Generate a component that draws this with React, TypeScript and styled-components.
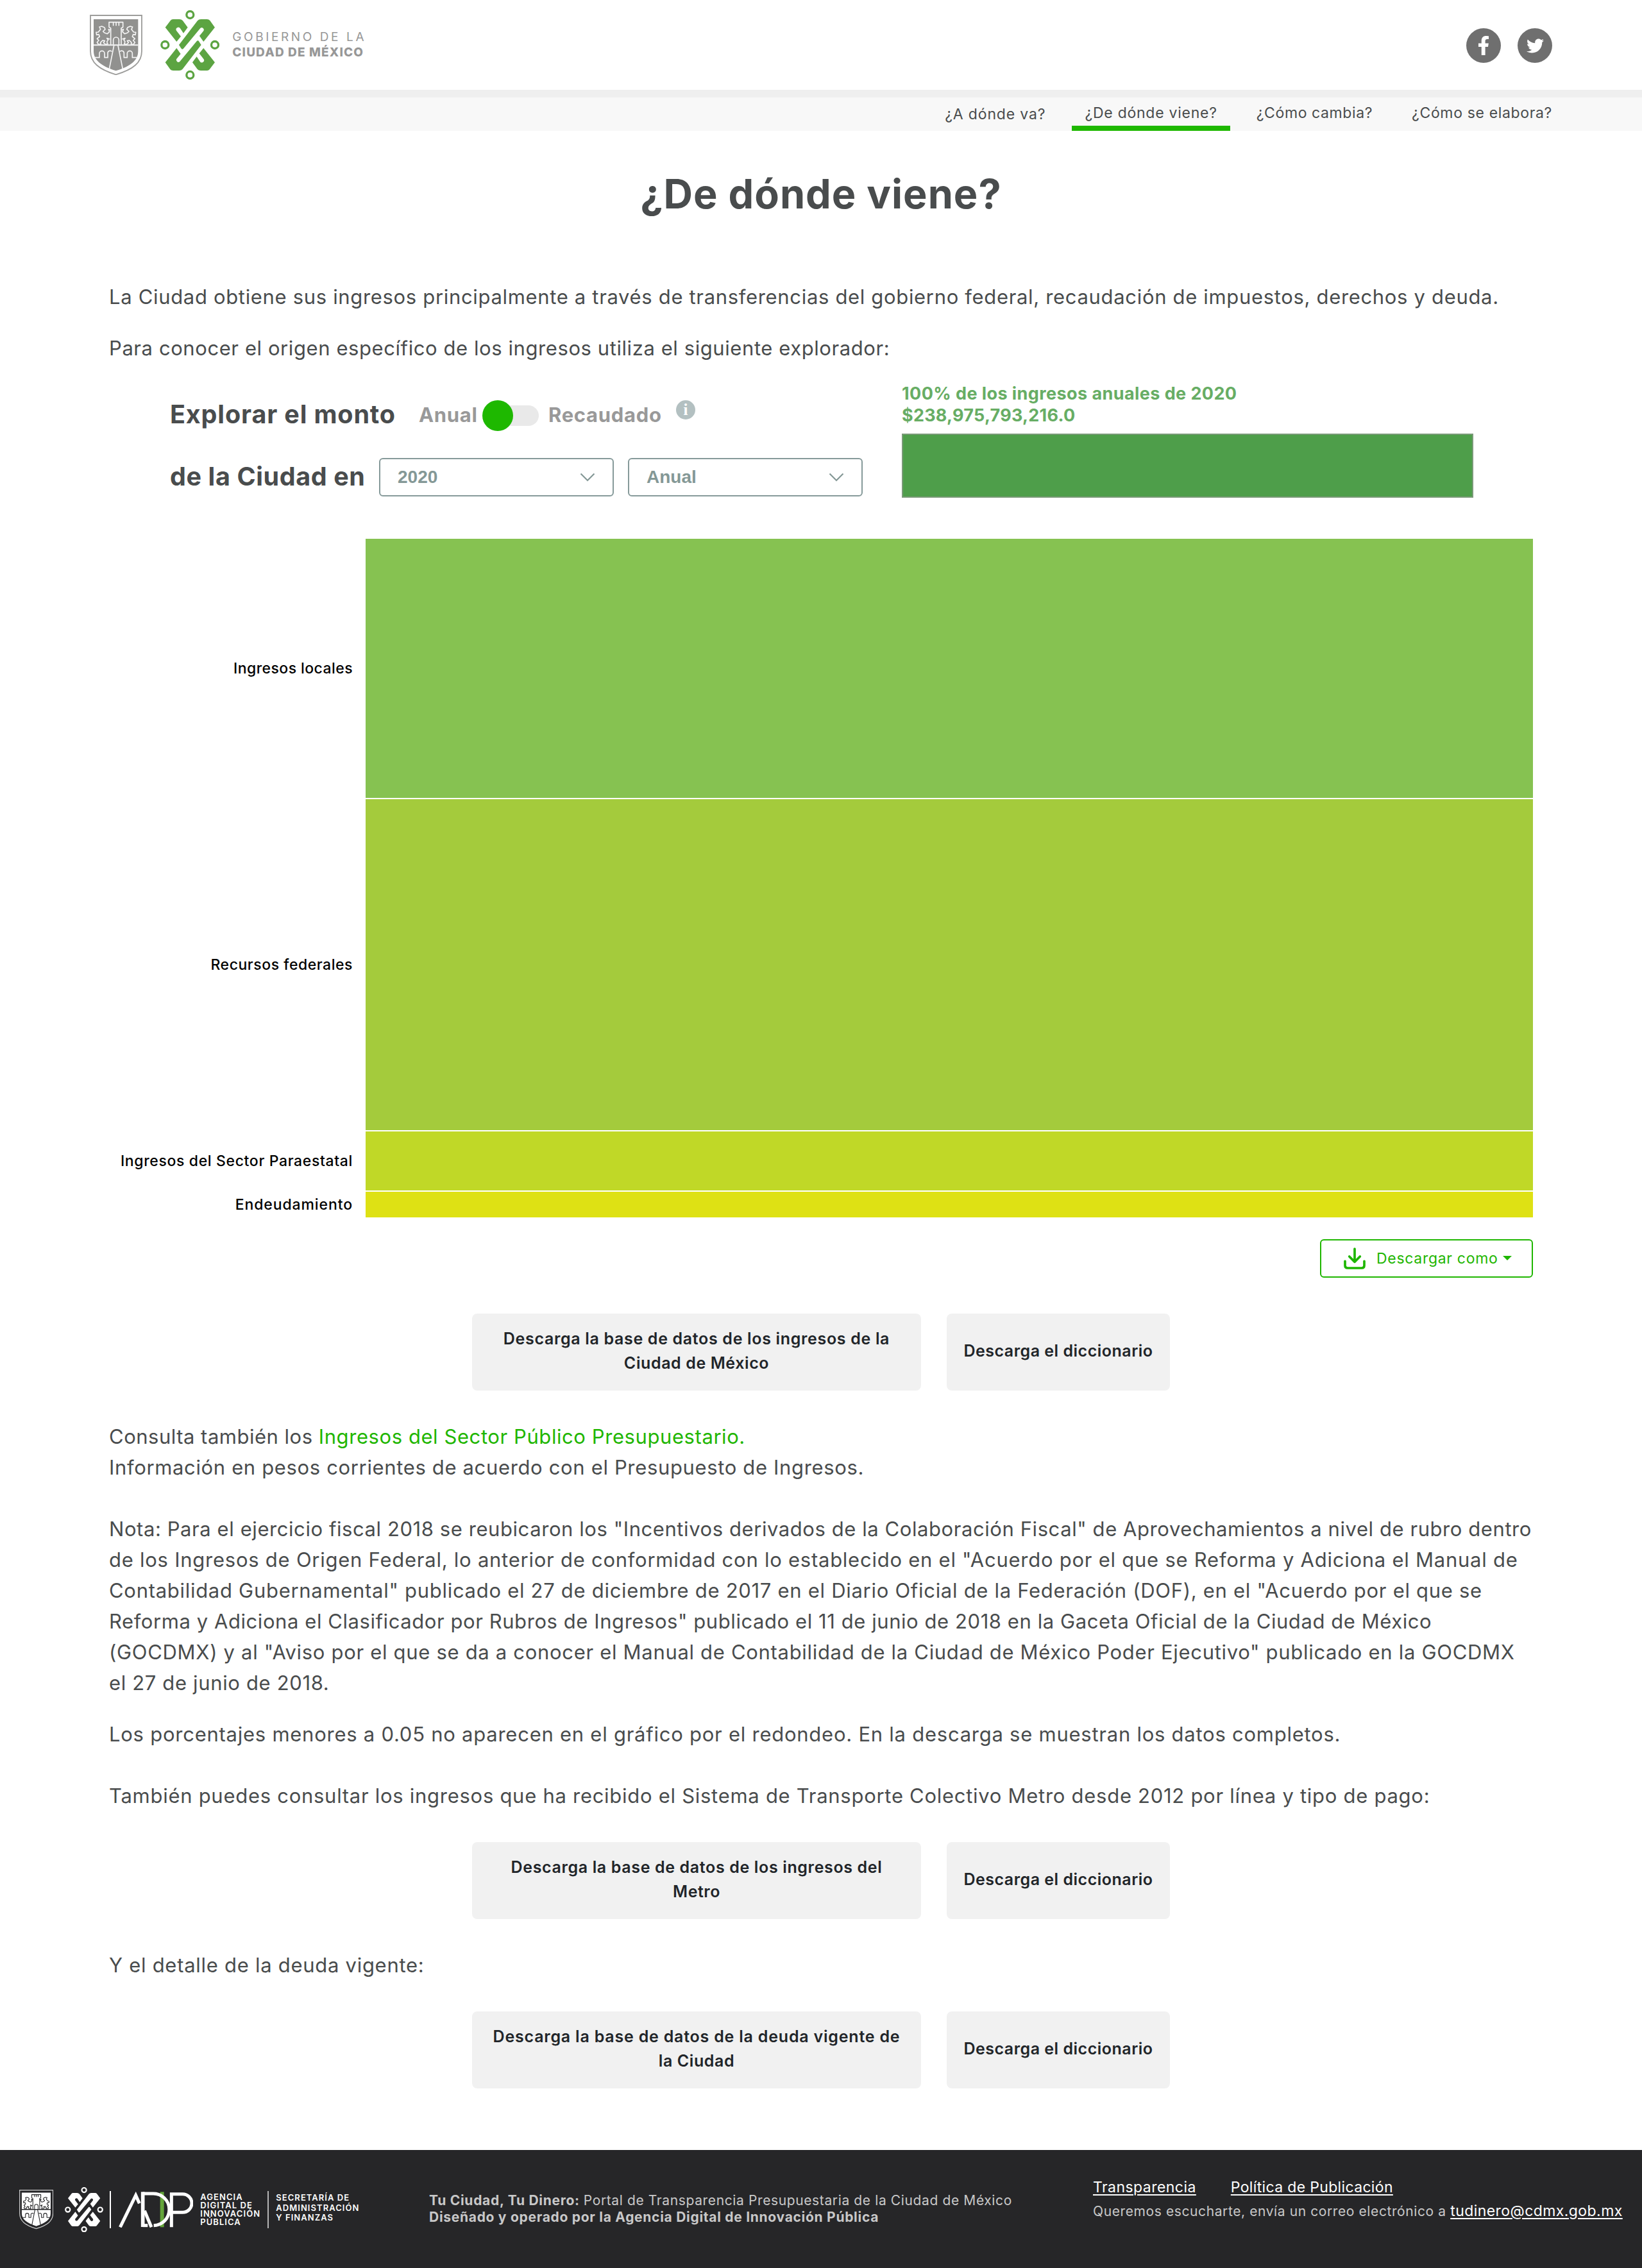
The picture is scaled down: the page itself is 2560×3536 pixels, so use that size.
import React from "react";
import styled, { createGlobalStyle } from "styled-components";
import { FaFacebookF, FaTwitter } from "react-icons/fa";

const GlobalStyle = createGlobalStyle`
  *, *::before, *::after { box-sizing: border-box; }
  body {
    margin: 0;
    background: #fff;
    color: #494c4d;
    font-family: Inter, "Open Sans", sans-serif;
  }
  a { color: inherit; }
`;

const Page = styled.div`
  width: 2560px;
  min-height: 3536px;
  display: flex;
  flex-direction: column;
`;

const Tracked = styled.span<{ $ls?: number }>`
  letter-spacing: ${(p) => p.$ls ?? 0}px;
  white-space: nowrap;
`;

/* ---------- header ---------- */

const Header = styled.header`
  height: 140px;
  padding: 0 140px;
  display: flex;
  align-items: center;
  justify-content: space-between;
`;

const Brand = styled.div`
  display: flex;
  align-items: center;
  gap: 28px;
`;

const BrandName = styled.div`
  display: flex;
  flex-direction: column;
  margin-left: -8px;
  color: #979797;
  font-size: 19px;
  line-height: 24px;
`;

const BrandTop = styled(Tracked)`
  font-weight: 400;
`;

const BrandBottom = styled(Tracked)`
  font-weight: 800;
`;

const Social = styled.div`
  display: flex;
  gap: 26px;
  padding-top: 2px;
`;

const SocialLink = styled.a`
  width: 54px;
  height: 54px;
  border-radius: 50%;
  background: #6f6f6f;
  color: #fff;
  display: flex;
  align-items: center;
  justify-content: center;
`;

const Nav = styled.nav`
  height: 64px;
  border-top: 12px solid #efefef;
  background: #f8f8f8;
  padding-right: 120px;
  display: flex;
  justify-content: flex-end;
  gap: 21px;
`;

const NavItem = styled.a<{ $active?: boolean; $low?: boolean; $ls: number }>`
  height: 52px;
  padding: ${(p) => (p.$low ? 5 : 3)}px 20px 0;
  border-bottom: 8px solid ${(p) => (p.$active ? "#1eb800" : "transparent")};
  font-size: 23px;
  line-height: 42px;
  letter-spacing: ${(p) => p.$ls}px;
  white-space: nowrap;
`;

/* ---------- main ---------- */

const Main = styled.main`
  padding: 0 168px;
  display: flex;
  flex-direction: column;
`;

const Title = styled.h1`
  margin: 58px 0 97px;
  text-align: center;
  font-size: 63px;
  font-weight: 700;
  line-height: 80px;
  letter-spacing: 1px;
`;

const Paragraph = styled.p<{ $mt?: number }>`
  margin: ${(p) => p.$mt ?? 0}px 0 0;
  padding-left: 2px;
  display: flex;
  flex-direction: column;
  font-size: 31px;
  line-height: 48px;
`;

const GreenLink = styled.a<{ $ls: number }>`
  color: #1eb600;
  letter-spacing: ${(p) => p.$ls}px;
`;

const Explorer = styled.section`
  margin: 29px 0 0 97px;
  height: 180px;
  display: grid;
  grid-template-columns: 1141px 891px;
`;

const ExplorerControls = styled.div`
  display: flex;
  flex-direction: column;
  gap: 18px;
`;

const ControlRow = styled.div<{ $h: number }>`
  height: ${(p) => p.$h}px;
  display: flex;
  align-items: center;
`;

const ControlLabel = styled.span<{ $w: number; $ls: number; $lift?: number }>`
  width: ${(p) => p.$w}px;
  padding-bottom: ${(p) => p.$lift ?? 0}px;
  font-size: 39.5px;
  font-weight: 700;
  letter-spacing: ${(p) => p.$ls}px;
  white-space: nowrap;
`;

const ToggleText = styled.span<{ $w: number; $pad?: number }>`
  width: ${(p) => p.$w}px;
  padding-left: ${(p) => p.$pad ?? 0}px;
  padding-top: 1px;
  color: #999;
  font-size: 31px;
  font-weight: 700;
  letter-spacing: 0.7px;
`;

const Switch = styled.span`
  width: 88px;
  height: 48px;
  margin-top: 4px;
  display: flex;
  align-items: center;
`;

const SwitchTrack = styled.span`
  width: 80px;
  height: 32px;
  margin-left: 8px;
  border-radius: 16px;
  background: #e9e9e9;
  display: flex;
  align-items: center;
`;

const SwitchKnob = styled.span`
  flex: none;
  width: 48px;
  height: 48px;
  margin-left: -8px;
  border-radius: 50%;
  background: #1eb800;
`;

const InfoBadge = styled.span`
  width: 30px;
  height: 30px;
  margin-bottom: 14px;
  border-radius: 50%;
  background: #b3c0c1;
  color: #fff;
  display: flex;
  align-items: center;
  justify-content: center;
  font: 700 25px/28px "Liberation Serif", serif;
`;

const SelectBox = styled.div`
  width: 366px;
  height: 60px;
  margin-right: 22px;
  padding: 0 27px;
  border: 2px solid #869a9a;
  border-radius: 6px;
  color: #849896;
  display: flex;
  align-items: center;
  justify-content: space-between;
  font: 700 28px "Liberation Sans", Arial, sans-serif;
`;

const Total = styled.div`
  display: flex;
  flex-direction: column;
  padding-top: 1px;
  color: #67ad64;
  font-size: 27px;
  font-weight: 700;
  line-height: 34px;
`;

const TotalBar = styled.div`
  height: 100px;
  margin-top: 11px;
  background: #4e9e4a;
  border: 2px solid #7a9a78;
`;

const Chart = styled.section`
  width: 2222px;
  margin-top: 64px;
  display: flex;
  flex-direction: column;
  gap: 2px;
`;

const ChartRow = styled.div`
  display: grid;
  grid-template-columns: 402px 1fr;
`;

const ChartLabel = styled.span<{ $ls: number }>`
  align-self: center;
  padding-right: 20px;
  text-align: right;
  color: #000;
  font-size: 23px;
  font-weight: 500;
  letter-spacing: ${(p) => p.$ls}px;
`;

const ChartBar = styled.div<{ $h: number; $color: string }>`
  height: ${(p) => p.$h}px;
  background: ${(p) => p.$color};
`;

const SaveAs = styled.button`
  width: 332px;
  height: 60px;
  margin: 34px 2px 0 auto;
  padding: 0 0 0 35px;
  border: 2px solid #1eb600;
  border-radius: 6px;
  background: #fff;
  color: #1eb600;
  display: flex;
  align-items: center;
  font: 400 23px Inter, sans-serif;
  letter-spacing: 0.7px;
`;

const SaveText = styled.span`
  margin: 0 7px 0 17px;
`;

const Caret = styled.span`
  margin-top: -2px;
  border: 7px solid transparent;
  border-top-color: currentColor;
  border-bottom: 0;
`;

const Downloads = styled.div<{ $mt: number }>`
  margin-top: ${(p) => p.$mt}px;
  display: flex;
  justify-content: center;
  gap: 40px;
`;

const DownloadBox = styled.a<{ $w: number }>`
  width: ${(p) => p.$w}px;
  height: 120px;
  padding-bottom: 4px;
  border-radius: 8px;
  background: #f1f1f1;
  color: #212529;
  display: flex;
  flex-direction: column;
  align-items: center;
  justify-content: center;
  font-size: 25px;
  font-weight: 600;
  line-height: 38px;
`;

/* ---------- footer ---------- */

const Footer = styled.footer`
  height: 184px;
  margin-top: 96px;
  background: #262628;
  color: #c8c8c8;
  display: grid;
  grid-template-columns: 669px 1035px 1fr;
  align-items: center;
`;

const FooterLogos = styled.div`
  padding: 2px 0 0 30px;
  height: 72px;
  display: flex;
  align-items: center;
  color: #fff;
  font-size: 13px;
  font-weight: 600;
`;

const FooterCrest = styled.span`
  display: flex;
  margin-right: 18px;
`;

const Rule = styled.span<{ $ml: number; $mr: number; $color: string }>`
  width: 2px;
  height: 58px;
  margin: 0 ${(p) => p.$mr}px 0 ${(p) => p.$ml}px;
  background: ${(p) => p.$color};
`;

const Agency = styled.div`
  width: 105px;
  margin-left: 11px;
  display: flex;
  flex-direction: column;
  line-height: 13.2px;
`;

const Secretary = styled.div`
  margin-bottom: 5px;
  display: flex;
  flex-direction: column;
  line-height: 15.7px;
`;

const FooterAbout = styled.div`
  display: flex;
  flex-direction: column;
  font-size: 21px;
  line-height: 26px;
  b { font-weight: 700; }
`;

const FooterContact = styled.div`
  padding-bottom: 31px;
  display: flex;
  flex-direction: column;
  font-size: 21px;
  line-height: 37px;
`;

const FooterLinks = styled.div`
  display: flex;
  gap: 54px;
`;

const FooterLink = styled.a<{ $ls: number }>`
  color: #fff;
  font-size: 23px;
  letter-spacing: ${(p) => p.$ls}px;
  text-decoration: underline;
  text-decoration-thickness: 2px;
  text-underline-offset: 3px;
`;

/* ---------- drawings ---------- */

const Crest = ({ width, fill, line, edge }: { width: number; fill: string; line: string; edge: string }) => (
  <svg width={width} height={(width * 284) / 246} viewBox="120 68 246 284" fill="none">
    <path d="M123 71H363V238C363 292 322 324 242 348C164 324 123 292 123 238Z" stroke={edge} strokeWidth="5.5" />
    <path d="M138 89H346V238C346 279 314 308 242 330C172 308 138 279 138 238Z" fill={fill} />
    <g stroke={line} strokeWidth="5" strokeLinejoin="round">
      <path d="M138 210H346" strokeWidth="6" />
      <path d="M218 208V131L210 126V103H275V126L267 131V208" />
      <path d="M230 104V120M243 104V120M256 104V120" />
      <path d="M230 208V186A13 13 0 0 1 256 186V208" />
      <path d="M233 212L211 322M252 212L274 322" />
      <path d="M140 268H165V249A12 12 0 0 1 189 249V268H204V249A11 11 0 0 1 223 240" />
      <path d="M344 268H319V249A12 12 0 0 0 295 249V268H280V249A11 11 0 0 0 261 240" />
      <path d="M218 140L208 136L212 148L202 157L188 152L182 146L192 136L188 127L176 122L165 125L170 136L160 149L150 150L152 162L162 160L166 170L154 180L162 188L154 197L160 206H172L170 198L180 188L190 190L184 198L192 206L204 205L200 194L206 186L200 178L214 182" />
      <path d="M267 140L277 136L273 148L283 157L297 152L303 146L293 136L297 127L309 122L320 125L315 136L325 149L335 150L333 162L323 160L319 170L331 180L323 188L331 197L325 206H313L315 198L305 188L295 190L301 198L293 206L281 205L285 194L279 186L285 178L271 182" />
    </g>
  </svg>
);

const CityMark = ({ width, color }: { width: number; color: string }) => {
  const half = (
    <>
      <path d="M473 128L498 95Q502 90 509 90H539Q549 90 555 97L578 128L558 155L543 133A10 10 0 0 0 525 143L546 170L526 195Z" />
      <path d="M640 90H668Q677 90 682 96L705 128L652 195L633 168L653 143A10 10 0 0 0 637 132L558 227Q552 234 547 226L537 210L624 97Q630 90 640 90Z" />
    </>
  );
  return (
    <svg width={width} height={(width * 324) / 277} viewBox="450 48 277 324" fill={color}>
      {half}
      <g transform="rotate(180 589 210)">{half}</g>
      <g fill="none" stroke={color} strokeWidth="10">
        <circle cx="589" cy="69" r="16.5" />
        <circle cx="589" cy="351" r="16.5" />
        <circle cx="472" cy="210" r="16.5" />
        <circle cx="705" cy="210" r="16.5" />
      </g>
    </svg>
  );
};

const AgencyMark = () => (
  <svg width="116" height="56" viewBox="558 23 348 168" fill="none" stroke="#fff" strokeWidth="15">
    <polyline points="565,189 638,40 655,78" />
    <line x1="679" y1="112" x2="711" y2="189" />
    <rect x="752" y="24" width="18" height="165" fill="#64a53a" stroke="none" />
    <line x1="671" y1="24" x2="671" y2="188" strokeWidth="17" />
    <path d="M671 32H718A74 74 0 0 1 722 181" />
    <line x1="671" y1="181" x2="694" y2="181" />
    <path d="M805 189V34H857A42 42 0 0 1 857 120H812" />
  </svg>
);

const Chevron = () => (
  <svg width="24" height="14" viewBox="0 0 24 14" fill="none" stroke="currentColor" strokeWidth="2.2">
    <path d="M1.5 1.5L12 12L22.5 1.5" />
  </svg>
);

const SaveIcon = () => (
  <svg width="34" height="34" viewBox="0 0 102 102" fill="none" stroke="currentColor" strokeWidth="11" strokeLinecap="round" strokeLinejoin="round">
    <path d="M51 6V66M26 42L51 67L76 42" />
    <path d="M6 64V84Q6 96 18 96H84Q96 96 96 84V64" />
  </svg>
);

/* ---------- content ---------- */

const segments = [
  { label: "Ingresos locales", height: 404, color: "#86c251", ls: 0.43 },
  { label: "Recursos federales", height: 516, color: "#a4cb3c", ls: 0.54 },
  { label: "Ingresos del Sector Paraestatal", height: 92, color: "#c0d827", ls: 0.64 },
  { label: "Endeudamiento", height: 40, color: "#dee114", ls: 0.9 },
];

const note: [string, number][] = [
  ['Nota: Para el ejercicio fiscal 2018 se reubicaron los "Incentivos derivados de la Colaboración Fiscal" de Aprovechamientos a nivel de rubro dentro', 0.575],
  ['de los Ingresos de Origen Federal, lo anterior de conformidad con lo establecido en el "Acuerdo por el que se Reforma y Adiciona el Manual de', 0.75],
  ['Contabilidad Gubernamental" publicado el 27 de diciembre de 2017 en el Diario Oficial de la Federación (DOF), en el "Acuerdo por el que se', 0.71],
  ['Reforma y Adiciona el Clasificador por Rubros de Ingresos" publicado el 11 de junio de 2018 en la Gaceta Oficial de la Ciudad de México', 0.57],
  ['(GOCDMX) y al "Aviso por el que se da a conocer el Manual de Contabilidad de la Ciudad de México Poder Ejecutivo" publicado en la GOCDMX', 0.69],
  ["el 27 de junio de 2018.", 0.65],
];

const DownloadPair = ({ mt, lines }: { mt: number; lines: [string, number][] }) => (
  <Downloads $mt={mt}>
    <DownloadBox $w={700}>
      {lines.map(([text, ls]) => (
        <Tracked key={text} $ls={ls}>{text}</Tracked>
      ))}
    </DownloadBox>
    <DownloadBox $w={348}>
      <Tracked $ls={0.5}>Descarga el diccionario</Tracked>
    </DownloadBox>
  </Downloads>
);

export default function App() {
  return (
    <Page>
      <GlobalStyle />
      <Header>
        <Brand>
          <Crest width={82} fill="#91918f" line="#f4f4f4" edge="#9d9d9b" />
          <CityMark width={92.3} color="#5ca442" />
          <BrandName>
            <BrandTop $ls={3.6}>GOBIERNO DE LA</BrandTop>
            <BrandBottom $ls={1.15}>CIUDAD DE MÉXICO</BrandBottom>
          </BrandName>
        </Brand>
        <Social>
          <SocialLink><FaFacebookF size={30} /></SocialLink>
          <SocialLink><FaTwitter size={27} /></SocialLink>
        </Social>
      </Header>
      <Nav>
        <NavItem $ls={0.85} $low>¿A dónde va?</NavItem>
        <NavItem $ls={0.75} $active>¿De dónde viene?</NavItem>
        <NavItem $ls={0.6}>¿Cómo cambia?</NavItem>
        <NavItem $ls={0.65}>¿Cómo se elabora?</NavItem>
      </Nav>

      <Main>
        <Title>¿De dónde viene?</Title>
        <Paragraph>
          <Tracked $ls={0.67}>
            La Ciudad obtiene sus ingresos principalmente a través de transferencias del gobierno federal, recaudación de impuestos, derechos y deuda.
          </Tracked>
        </Paragraph>
        <Paragraph $mt={32}>
          <Tracked $ls={0.58}>Para conocer el origen específico de los ingresos utiliza el siguiente explorador:</Tracked>
        </Paragraph>

        <Explorer>
          <ExplorerControls>
            <ControlRow $h={100}>
              <ControlLabel $w={388} $ls={0.85}>Explorar el monto</ControlLabel>
              <ToggleText $w={99}>Anual</ToggleText>
              <Switch>
                <SwitchTrack><SwitchKnob /></SwitchTrack>
              </Switch>
              <ToggleText $w={214} $pad={15}>Recaudado</ToggleText>
              <InfoBadge>i</InfoBadge>
            </ControlRow>
            <ControlRow $h={60}>
              <ControlLabel $w={326} $ls={0.6} $lift={3}>de la Ciudad en</ControlLabel>
              <SelectBox>2020<Chevron /></SelectBox>
              <SelectBox>Anual<Chevron /></SelectBox>
            </ControlRow>
          </ExplorerControls>
          <Total>
            <Tracked $ls={0.42}>100% de los ingresos anuales de 2020</Tracked>
            <Tracked $ls={0.25}>$238,975,793,216.0</Tracked>
            <TotalBar />
          </Total>
        </Explorer>

        <Chart>
          {segments.map((s) => (
            <ChartRow key={s.label}>
              <ChartLabel $ls={s.ls}>{s.label}</ChartLabel>
              <ChartBar $h={s.height} $color={s.color} />
            </ChartRow>
          ))}
        </Chart>

        <SaveAs>
          <SaveIcon />
          <SaveText>Descargar como</SaveText>
          <Caret />
        </SaveAs>

        <DownloadPair mt={56} lines={[["Descarga la base de datos de los ingresos de la", 0.67], ["Ciudad de México", 0.6]]} />

        <Paragraph $mt={48}>
          <span>
            <Tracked $ls={0.5}>Consulta también los </Tracked>
            <GreenLink $ls={0.58}>Ingresos del Sector Público Presupuestario.</GreenLink>
          </span>
          <Tracked $ls={0.65}>Información en pesos corrientes de acuerdo con el Presupuesto de Ingresos.</Tracked>
        </Paragraph>
        <Paragraph $mt={48}>
          {note.map(([text, ls]) => (
            <Tracked key={text} $ls={ls}>{text}</Tracked>
          ))}
        </Paragraph>
        <Paragraph $mt={32}>
          <Tracked $ls={0.75}>Los porcentajes menores a 0.05 no aparecen en el gráfico por el redondeo. En la descarga se muestran los datos completos.</Tracked>
        </Paragraph>
        <Paragraph $mt={48}>
          <Tracked $ls={0.72}>También puedes consultar los ingresos que ha recibido el Sistema de Transporte Colectivo Metro desde 2012 por línea y tipo de pago:</Tracked>
        </Paragraph>
        <DownloadPair mt={48} lines={[["Descarga la base de datos de los ingresos del", 0.64], ["Metro", 0.5]]} />
        <Paragraph $mt={48}>
          <Tracked $ls={0.72}>Y el detalle de la deuda vigente:</Tracked>
        </Paragraph>
        <DownloadPair mt={48} lines={[["Descarga la base de datos de la deuda vigente de", 0.79], ["la Ciudad", 0.6]]} />
      </Main>

      <Footer>
        <FooterLogos>
          <FooterCrest>
            <Crest width={53.3} fill="#ffffff" line="#262628" edge="#d0d0d0" />
          </FooterCrest>
          <CityMark width={60} color="#fff" />
          <Rule $ml={10} $mr={12} $color="#fff" />
          <AgencyMark />
          <Agency>
            <Tracked $ls={1.05}>AGENCIA</Tracked>
            <Tracked $ls={1.05}>DIGITAL DE</Tracked>
            <Tracked $ls={1.05}>INNOVACIÓN</Tracked>
            <Tracked $ls={1.05}>PÚBLICA</Tracked>
          </Agency>
          <Rule $ml={0} $mr={11} $color="#b5b5b5" />
          <Secretary>
            <Tracked $ls={1.05}>SECRETARÍA DE</Tracked>
            <Tracked $ls={1.05}>ADMINISTRACIÓN</Tracked>
            <Tracked $ls={1.05}>Y FINANZAS</Tracked>
          </Secretary>
        </FooterLogos>
        <FooterAbout>
          <span>
            <Tracked as="b" $ls={0.72}>Tu Ciudad, Tu Dinero:</Tracked>{" "}
            <Tracked $ls={0.62}>Portal de Transparencia Presupuestaria de la Ciudad de México</Tracked>
          </span>
          <Tracked as="b" $ls={0.71}>Diseñado y operado por la Agencia Digital de Innovación Pública</Tracked>
        </FooterAbout>
        <FooterContact>
          <FooterLinks>
            <FooterLink $ls={0.45}>Transparencia</FooterLink>
            <FooterLink $ls={0.34}>Política de Publicación</FooterLink>
          </FooterLinks>
          <span>
            <Tracked $ls={0.6}>Queremos escucharte, envía un correo electrónico a </Tracked>
            <FooterLink $ls={0.43}>tudinero@cdmx.gob.mx</FooterLink>
          </span>
        </FooterContact>
      </Footer>
    </Page>
  );
}
